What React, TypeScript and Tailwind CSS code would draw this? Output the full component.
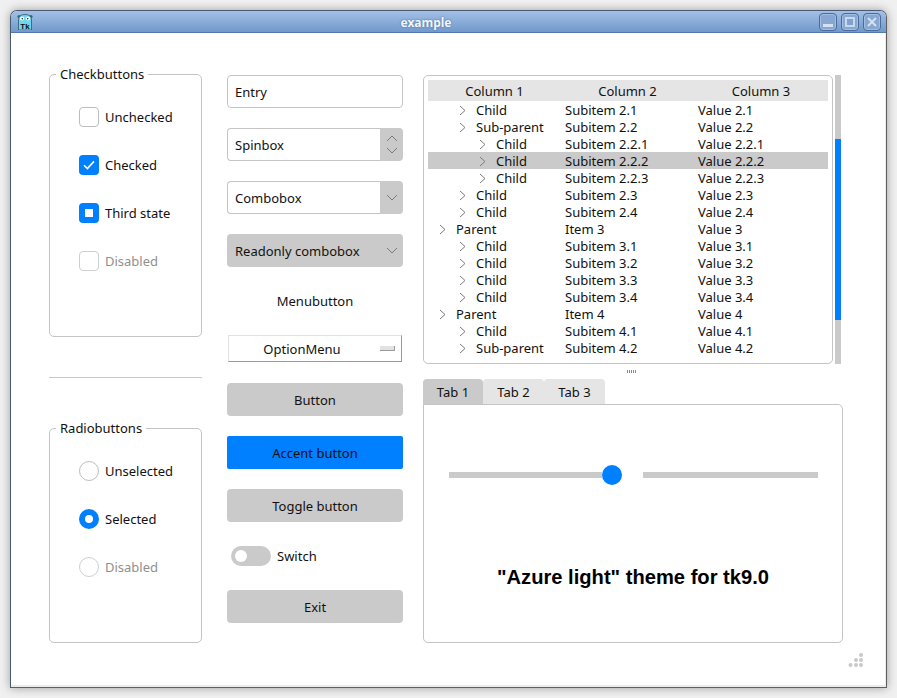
import React from 'react';

type Row = { level: number; name: string; sub: string; val: string; selected?: boolean };

const rows: Row[] = [
  { level: 1, name: 'Child', sub: 'Subitem 2.1', val: 'Value 2.1' },
  { level: 1, name: 'Sub-parent', sub: 'Subitem 2.2', val: 'Value 2.2' },
  { level: 2, name: 'Child', sub: 'Subitem 2.2.1', val: 'Value 2.2.1' },
  { level: 2, name: 'Child', sub: 'Subitem 2.2.2', val: 'Value 2.2.2', selected: true },
  { level: 2, name: 'Child', sub: 'Subitem 2.2.3', val: 'Value 2.2.3' },
  { level: 1, name: 'Child', sub: 'Subitem 2.3', val: 'Value 2.3' },
  { level: 1, name: 'Child', sub: 'Subitem 2.4', val: 'Value 2.4' },
  { level: 0, name: 'Parent', sub: 'Item 3', val: 'Value 3' },
  { level: 1, name: 'Child', sub: 'Subitem 3.1', val: 'Value 3.1' },
  { level: 1, name: 'Child', sub: 'Subitem 3.2', val: 'Value 3.2' },
  { level: 1, name: 'Child', sub: 'Subitem 3.3', val: 'Value 3.3' },
  { level: 1, name: 'Child', sub: 'Subitem 3.4', val: 'Value 3.4' },
  { level: 0, name: 'Parent', sub: 'Item 4', val: 'Value 4' },
  { level: 1, name: 'Child', sub: 'Subitem 4.1', val: 'Value 4.1' },
  { level: 1, name: 'Sub-parent', sub: 'Subitem 4.2', val: 'Value 4.2' },
];

const Frame = ({ label, className, children }: { label: string; className: string; children: React.ReactNode }) => (
  <div className={`relative border border-[#c4c4c4] rounded-[5px] ${className}`}>
    <span className="absolute left-[6px] top-[-10px] bg-white px-[4px] leading-[18px]">{label}</span>
    {children}
  </div>
);

const Check = ({ label, state }: { label: string; state: 'off' | 'on' | 'third' | 'disabled' }) => (
  <div className="flex items-center h-[20px] gap-[6px]">
    {state === 'on' || state === 'third' ? (
      <span className="w-[20px] h-[20px] rounded-[4px] bg-[#007fff] flex items-center justify-center">
        {state === 'on' ? (
          <svg width="12" height="10" viewBox="0 0 12 10" fill="none" stroke="white" strokeWidth="1.6">
            <path d="M1 5.2 L4.4 8.6 L11 1.4" />
          </svg>
        ) : (
          <span className="w-[8px] h-[8px] bg-white" />
        )}
      </span>
    ) : (
      <span className={`w-[20px] h-[20px] rounded-[4px] border ${state === 'off' ? 'border-[#bdbdbd]' : 'border-[#cfcfcf]'}`} />
    )}
    <span className={`pt-[2px] ${state === 'disabled' ? 'text-[#8f8f8f]' : ''}`}>{label}</span>
  </div>
);

const Radio = ({ label, state }: { label: string; state: 'off' | 'on' | 'disabled' }) => (
  <div className="flex items-center h-[20px] gap-[6px]">
    {state === 'on' ? (
      <span className="w-[20px] h-[20px] rounded-full bg-[#007fff] flex items-center justify-center">
        <span className="w-[8px] h-[8px] rounded-full bg-white" />
      </span>
    ) : (
      <span className={`w-[20px] h-[20px] rounded-full border ${state === 'off' ? 'border-[#bdbdbd]' : 'border-[#cfcfcf]'}`} />
    )}
    <span className={`pt-[2px] ${state === 'disabled' ? 'text-[#8f8f8f]' : ''}`}>{label}</span>
  </div>
);

const GrayButton = ({ label, className }: { label: string; className: string }) => (
  <div className={`h-[33px] pt-[2px] rounded-[4px] bg-[#cacaca] flex items-center justify-center ${className}`}>{label}</div>
);

const WinButton = ({ children }: { children: React.ReactNode }) => (
  <span className="w-[18px] h-[18px] rounded-[4px] border border-[#4a6a98] bg-[#86a7d2] shadow-[inset_0_0_0_1px_#a4bfe2] flex items-center justify-center">
    {children}
  </span>
);

const ArrowDown = () => (
  <svg width="12" height="7" viewBox="0 0 12 7" fill="none" stroke="#7a7a7a" strokeWidth="1">
    <path d="M1 1 L6 6 L11 1" />
  </svg>
);

const ArrowUp = () => (
  <svg width="12" height="7" viewBox="0 0 12 7" fill="none" stroke="#7a7a7a" strokeWidth="1">
    <path d="M1 6 L6 1 L11 6" />
  </svg>
);

const TreeArrow = () => (
  <svg width="7" height="11" viewBox="0 0 7 11" fill="none" stroke="#7c7c7c" strokeWidth="1" className="shrink-0">
    <path d="M1 1 L6 5.5 L1 10" />
  </svg>
);

const App = () => (
  <div className="w-[897px] h-[698px] bg-[#f0f0f0] pl-[10px] pt-[10px] overflow-hidden text-[13px] text-[#111] font-['Noto_Sans',sans-serif]">
    <div className="relative w-[877px] h-[678px] bg-white border border-[#4a5a70] border-b-[#5f5f5f] border-r-[#5f5f5f] rounded-t-[7px] overflow-hidden flex flex-col shadow-[0_0_10px_rgba(0,0,0,0.35),inset_-1px_-2px_0_#ececec]">
      {/* title bar */}
      <div className="h-[22px] shrink-0 flex items-center justify-between bg-gradient-to-b from-[#a3c0e6] to-[#7199cb] border-b border-[#5579a8] pl-[6px] pr-[5px]">
        <svg width="16" height="16" viewBox="0 0 16 16" className="shrink-0 mt-[1px]">
          <circle cx="2" cy="2.5" r="1.6" fill="#2b6b80" />
          <circle cx="14" cy="2.5" r="1.6" fill="#2b6b80" />
          <path d="M1.5 16 V6 Q1.5 0.5 8 0.5 Q14.5 0.5 14.5 6 V16 Z" fill="#6fd6ec" stroke="#1f4a5c" strokeWidth="0.7" />
          <circle cx="5" cy="4.5" r="2.1" fill="white" />
          <circle cx="11" cy="4.5" r="2.1" fill="white" />
          <circle cx="5.3" cy="4.7" r="0.8" fill="#222" />
          <circle cx="10.7" cy="4.7" r="0.8" fill="#222" />
          <text x="8" y="15" textAnchor="middle" fontSize="8" fontWeight="700" fill="#111" fontFamily="'Liberation Sans', sans-serif">Tk</text>
        </svg>
        <span className="text-[12px] font-bold text-[#f2f6fb] pt-[2px] [text-shadow:0_0_2px_#3f6396]">example</span>
        <div className="flex gap-[4px]">
          <WinButton>
            <span className="w-[10px] h-[3px] bg-[#d5e1f0] mt-[8px]" />
          </WinButton>
          <WinButton>
            <span className="w-[10px] h-[10px] border-2 border-[#c9d8ec] bg-[#7fa2d0] mt-[1px]" />
          </WinButton>
          <WinButton>
            <svg width="10" height="10" viewBox="0 0 10 10" stroke="#d5e1f0" strokeWidth="2">
              <path d="M1 1 L9 9 M9 1 L1 9" />
            </svg>
          </WinButton>
        </div>
      </div>

      {/* body */}
      <div className="flex flex-1 pl-[38px] pt-[41px]">
        {/* left column */}
        <div className="w-[153px] shrink-0 flex flex-col">
          <Frame label="Checkbuttons" className="h-[263px] pl-[29px] pt-[32px] flex flex-col gap-[28px]">
            <Check label="Unchecked" state="off" />
            <Check label="Checked" state="on" />
            <Check label="Third state" state="third" />
            <Check label="Disabled" state="disabled" />
          </Frame>
          <div className="h-px bg-[#c8c8c8] mt-[40px]" />
          <Frame label="Radiobuttons" className="h-[215px] mt-[50px] pl-[29px] pt-[32px] flex flex-col gap-[28px]">
            <Radio label="Unselected" state="off" />
            <Radio label="Selected" state="on" />
            <Radio label="Disabled" state="disabled" />
          </Frame>
        </div>

        {/* middle column */}
        <div className="w-[176px] shrink-0 ml-[25px] mt-[1px] flex flex-col">
          <div className="h-[33px] border border-[#c4c4c4] rounded-[4px] pl-[7px] pt-[2px] flex items-center">Entry</div>
          <div className="h-[33px] mt-[20px] flex items-stretch">
            <span className="flex-1 border border-r-0 border-[#c4c4c4] rounded-l-[4px] pl-[7px] pt-[2px] flex items-center">Spinbox</span>
            <span className="w-[23px] bg-[#cacaca] rounded-r-[4px] flex flex-col items-center justify-center gap-[5px]">
              <ArrowUp />
              <ArrowDown />
            </span>
          </div>
          <div className="h-[33px] mt-[20px] flex items-stretch">
            <span className="flex-1 border border-r-0 border-[#c4c4c4] rounded-l-[4px] pl-[7px] pt-[2px] flex items-center">Combobox</span>
            <span className="w-[23px] bg-[#cacaca] rounded-r-[4px] flex items-center justify-center">
              <ArrowDown />
            </span>
          </div>
          <div className="h-[33px] mt-[20px] rounded-[4px] bg-[#cacaca] flex items-center justify-between pl-[8px] pr-[5px]">
            <span className="pt-[2px]">Readonly combobox</span>
            <ArrowDown />
          </div>
          <div className="h-[20px] mt-[24px] pt-[2px] flex items-center justify-center">Menubutton</div>
          <div className="relative h-[27px] mt-[24px] mx-[1px] border border-[#e2e2e2] border-b-[#9a9a9a] border-r-[#9a9a9a] flex items-center justify-center pr-[26px] pt-[2px]">
            OptionMenu
            <span className="absolute right-[6px] top-[10px] w-[15px] h-[5px] bg-[#e2e2e2] border-b border-r border-[#9a9a9a]" />
          </div>
          <GrayButton label="Button" className="mt-[21px]" />
          <div className="h-[33px] mt-[20px] pt-[2px] rounded-[2px] bg-[#007fff] flex items-center justify-center">Accent button</div>
          <GrayButton label="Toggle button" className="mt-[20px]" />
          <div className="h-[20px] mt-[24px] ml-[4px] flex items-center gap-[6px]">
            <span className="w-[40px] h-[20px] rounded-full bg-[#cacaca] flex items-center pl-[4px]">
              <span className="w-[12px] h-[12px] rounded-full bg-white" />
            </span>
            <span className="pt-[2px]">Switch</span>
          </div>
          <GrayButton label="Exit" className="mt-[24px]" />
        </div>

        {/* right column */}
        <div className="w-[420px] shrink-0 ml-[20px] mt-[1px] flex flex-col">
          <div className="flex h-[289px]">
            <div className="w-[410px] border border-[#c4c4c4] rounded-[5px] p-[4px]">
              <div className="h-[21px] pt-[2px] bg-[#e5e5e5] grid grid-cols-[133px_133px_134px] items-center text-center">
                <span>Column 1</span>
                <span>Column 2</span>
                <span>Column 3</span>
              </div>
              {rows.map((r, i) => (
                <div key={i} className={`h-[17px] pb-[2px] grid grid-cols-[133px_133px_134px] items-center whitespace-nowrap ${r.selected ? 'bg-[#cacaca]' : ''}`}>
                  <span className={`flex items-center ${r.level === 0 ? 'pl-[11px]' : r.level === 1 ? 'pl-[31px]' : 'pl-[51px]'}`}>
                    <TreeArrow />
                    <span className="ml-[10px]">{r.name}</span>
                  </span>
                  <span className="pl-[4px]">{r.sub}</span>
                  <span className="pl-[4px]">{r.val}</span>
                </div>
              ))}
            </div>
            <div className="w-[6px] ml-[2px] bg-[#cacaca] flex flex-col">
              <div className="h-[181px] mt-[64px] bg-[#007fff]" />
            </div>
          </div>
          <div className="h-[15px] flex justify-center pt-[6px]">
            <span className="w-[9px] h-[3px] ml-[-3px] bg-[repeating-linear-gradient(90deg,#8a8a8a_0,#8a8a8a_1px,transparent_1px,transparent_2px)]" />
          </div>
          <div className="flex h-[25px]">
            <span className="w-[60px] pt-[2px] bg-[#cacaca] rounded-t-[4px] flex items-center justify-center">Tab 1</span>
            <span className="w-[61px] pt-[2px] bg-[#e5e5e5] rounded-t-[4px] flex items-center justify-center">Tab 2</span>
            <span className="w-[61px] pt-[2px] bg-[#e5e5e5] rounded-t-[4px] flex items-center justify-center">Tab 3</span>
          </div>
          <div className="h-[239px] border border-[#c4c4c4] rounded-b-[5px] rounded-tr-[5px] flex flex-col">
            <div className="h-[6px] mt-[67px] ml-[25px] flex items-center">
              <div className="w-[153px] h-[6px] bg-[#cacaca]" />
              <div className="w-[20px] h-[20px] rounded-full bg-[#007fff] shrink-0" />
              <div className="w-[175px] h-[6px] ml-[21px] bg-[#cacaca]" />
            </div>
            <div className="mt-[87px] text-center text-[20.15px] leading-[24px] font-bold text-black font-['Liberation_Sans',sans-serif]">
              "Azure light" theme for tk9.0
            </div>
          </div>
        </div>
      </div>

      {/* resize grip */}
      <svg width="16" height="16" viewBox="0 0 16 16" fill="#c9c9c9" className="absolute right-[22px] bottom-[19px]">
        <circle cx="13" cy="3" r="2" />
        <circle cx="8" cy="8" r="2" />
        <circle cx="13" cy="8" r="2" />
        <circle cx="2.5" cy="13" r="2" />
        <circle cx="8" cy="13" r="2" />
        <circle cx="13" cy="13" r="2" />
      </svg>
    </div>
  </div>
);

export default App;
